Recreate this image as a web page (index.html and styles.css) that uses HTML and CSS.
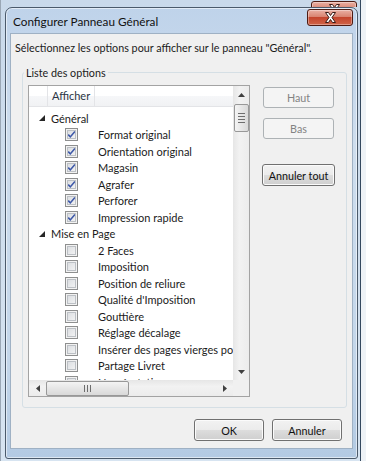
FILE: index.html
```html
<!DOCTYPE html>
<html lang="fr">
<head>
  <meta charset="UTF-8">
  <meta name="viewport" content="width=device-width, initial-scale=1.0">
  <title>Configurer Panneau Général</title>
  <link rel="stylesheet" href="styles.css">
</head>
<body>
  <div class="back-window">
    <div class="back-bar">
      <span class="close-btn back-close">
        <svg width="15" height="13" viewBox="0 0 15 13"><path d="M2.5 1.5h3l2 3 2-3h3l-3.5 5 3.5 5h-3l-2-3-2 3h-3l3.5-5z" fill="#fff" stroke="#3b1b16" stroke-width="1"/></svg>
      </span>
    </div>

    <div class="dialog">
      <div class="titlebar">
        <span class="title">Configurer Panneau Général</span>
        <button class="close-btn">
          <svg width="15" height="13" viewBox="0 0 15 13"><path d="M2.5 1.5h3l2 3 2-3h3l-3.5 5 3.5 5h-3l-2-3-2 3h-3l3.5-5z" fill="#fff" stroke="#3b1b16" stroke-width="1"/></svg>
        </button>
      </div>

      <div class="client">
        <p class="intro">Sélectionnez les options pour afficher sur le panneau "Général".</p>

        <!-- Liste des options -->
        <div class="group">
          <div class="group-title">Liste des options</div>
          <div class="group-body">
            <div class="listview">
              <div class="lv-main">
                <div class="lv-content">
                  <div class="lv-header">
                    <div class="col col-a"></div>
                    <div class="col col-b">Afficher</div>
                    <div class="col col-c"></div>
                  </div>
                  <div class="lv-rows">
                    <div class="row group-row"><svg class="expander" width="6" height="6" viewBox="0 0 6 6"><path d="M6 0v6H0z" fill="#262626"/></svg>Général</div>
                    <div class="row item"><span class="check on"></span>Format original</div>
                    <div class="row item"><span class="check on"></span>Orientation original</div>
                    <div class="row item"><span class="check on"></span>Magasin</div>
                    <div class="row item"><span class="check on"></span>Agrafer</div>
                    <div class="row item"><span class="check on"></span>Perforer</div>
                    <div class="row item"><span class="check on"></span>Impression rapide</div>
                    <div class="row group-row"><svg class="expander" width="6" height="6" viewBox="0 0 6 6"><path d="M6 0v6H0z" fill="#262626"/></svg>Mise en Page</div>
                    <div class="row item"><span class="check"></span>2 Faces</div>
                    <div class="row item"><span class="check"></span>Imposition</div>
                    <div class="row item"><span class="check"></span>Position de reliure</div>
                    <div class="row item"><span class="check"></span>Qualité d'Imposition</div>
                    <div class="row item"><span class="check"></span>Gouttière</div>
                    <div class="row item"><span class="check"></span>Réglage décalage</div>
                    <div class="row item"><span class="check"></span>Insérer des pages vierges pour</div>
                    <div class="row item"><span class="check"></span>Partage Livret</div>
                    <div class="row item"><span class="check"></span>Numérotation</div>
                  </div>
                </div>
                <div class="vscroll">
                  <div class="arrow"><svg width="7" height="4" viewBox="0 0 7 4"><path d="M3.5 0L7 4H0z" fill="#404040"/></svg></div>
                  <div class="vthumb"><span></span><span></span><span></span><span></span></div>
                  <div class="track"></div>
                  <div class="arrow"><svg width="7" height="4" viewBox="0 0 7 4"><path d="M0 0h7L3.5 4z" fill="#404040"/></svg></div>
                </div>
              </div>
              <div class="lv-bottom">
                <div class="hscroll">
                  <div class="arrow"><svg width="4" height="7" viewBox="0 0 4 7"><path d="M0 3.5L4 0v7z" fill="#404040"/></svg></div>
                  <div class="hthumb"><span></span><span></span><span></span></div>
                  <div class="track"></div>
                  <div class="arrow"><svg width="4" height="7" viewBox="0 0 4 7"><path d="M0 0l4 3.5L0 7z" fill="#404040"/></svg></div>
                </div>
                <div class="corner"></div>
              </div>
            </div>

            <div class="side">
              <button class="btn" disabled>Haut</button>
              <button class="btn move-down" disabled>Bas</button>
              <button class="btn wide">Annuler tout</button>
            </div>
          </div>
        </div>

        <div class="footer">
          <button class="btn">OK</button>
          <button class="btn">Annuler</button>
        </div>
      </div>
    </div>
  </div>
</body>
</html>
```

FILE: styles.css
```css
body {
  margin: 0;
  width: 366px;
  height: 461px;
  overflow: hidden;
  background: #eef2f6;
  font-family: Lato, "Noto Sans", sans-serif;
  font-size: 11px;
  color: #1b1b1b;
}
.back-window {
  width: 361px;
  height: 461px;
  box-sizing: border-box;
  border-left: 1px solid #9aa7b5;
  border-right: 1px solid #34485e;
  background: linear-gradient(#c9d9ea, #d7e4f1);
}
.back-bar {
  height: 7px;
  overflow: hidden;
  display: flex;
  justify-content: flex-end;
  padding-right: 3px;
}
.back-close {
  margin-top: -10px;
}
.close-btn {
  width: 46px;
  height: 17px;
  box-sizing: border-box;
  margin-top: 1px;
  padding: 0;
  border: 1px solid #4e1b12;
  border-radius: 3px;
  background: linear-gradient(#eab0a3, #d98471 45%, #c4452d 50%, #cf6448);
  box-shadow: inset 0 0 0 1px rgba(255, 255, 255, 0.35);
  display: flex;
  align-items: center;
  justify-content: center;
}
.dialog {
  margin: 0 2px 0 4px;
  height: 452px;
  box-sizing: border-box;
  border: 1px solid #4b5a6b;
  border-radius: 7px 7px 3px 3px;
  background: linear-gradient(#bfd3ea, #cfdeee 30%, #c3d6ea 80%, #b3cae3);
  box-shadow: inset 0 0 0 1px rgba(255, 255, 255, 0.55);
  padding: 0 4px 9px;
  display: flex;
  flex-direction: column;
}
.titlebar {
  height: 25px;
  flex-shrink: 0;
  display: flex;
  justify-content: space-between;
  align-items: flex-start;
}
.title {
  margin: 6px 0 0 3px;
  line-height: 16px;
  font-size: 11.75px;
  color: #111;
}
.client {
  flex: 1;
  border: 1px solid #9fb1c4;
  background: #f0f0f0;
  display: flex;
  flex-direction: column;
}
.intro {
  margin: 0;
  padding: 6px 0 0 4px;
  line-height: 15px;
  font-size: 10.75px;
}
.group {
  margin: 17px 5px 0 11px;
  border: 1px solid #d5dfe5;
  border-radius: 3px;
  padding: 0 5px 10px;
}
.group-title {
  display: table;
  margin: -8px 0 0 -4px;
  padding: 0 2px;
  line-height: 15px;
  font-size: 10.75px;
  background: #f0f0f0;
}
.group-body {
  display: flex;
  margin-top: 5px;
}
.listview {
  width: 222px;
  height: 312px;
  box-sizing: border-box;
  border: 1px solid #a3a3a3;
  background: #fff;
  display: flex;
  flex-direction: column;
}
.lv-main {
  flex: 1;
  display: flex;
  min-height: 0;
}
.lv-content {
  flex: 1;
  min-width: 0;
  overflow: hidden;
}
.lv-header {
  height: 21px;
  box-sizing: border-box;
  display: flex;
  border-bottom: 1px solid #e3e4e7;
  background: linear-gradient(#fff, #fff 50%, #f6f7f9 50%, #f1f2f4);
}
.col {
  line-height: 20px;
  border-right: 1px solid #e3e4e7;
  color: #2b3443;
}
.col-a {
  width: 18px;
}
.col-b {
  width: 42px;
  padding-left: 4px;
}
.col-c {
  flex: 1;
  border-right: 0;
}
.lv-rows {
  padding-top: 3px;
}
.row {
  height: 16.5px;
  display: flex;
  align-items: center;
  white-space: nowrap;
}
.group-row {
  padding-left: 10px;
}
.expander {
  margin-right: 6px;
}
.item {
  padding-left: 36px;
}
.check {
  flex-shrink: 0;
  width: 13px;
  height: 13px;
  box-sizing: border-box;
  margin-right: 20px;
  border: 1px solid #8e8f8f;
  background: linear-gradient(135deg, #d6d9dd, #f7f7f7);
  box-shadow: inset 0 0 0 1px #f2f2f2, inset 0 0 0 2px #bcc0c5;
}
.check.on {
  background: url("data:image/svg+xml,%3Csvg xmlns='http://www.w3.org/2000/svg' width='11' height='11'%3E%3Cpath d='M2.2 5.6l2.1 2.3 4.6-5.4' fill='none' stroke='%233d58a8' stroke-width='1.6'/%3E%3C/svg%3E") center no-repeat, linear-gradient(135deg, #d6d9dd, #f7f7f7);
}
.vscroll {
  width: 16px;
  flex-shrink: 0;
  display: flex;
  flex-direction: column;
  align-items: center;
  background: linear-gradient(to right, #e6e6e6, #f2f2f2 40%, #ececec);
}
.arrow {
  width: 17px;
  height: 17px;
  display: flex;
  align-items: center;
  justify-content: center;
  flex-shrink: 0;
}
.vthumb {
  width: 15px;
  height: 28px;
  box-sizing: border-box;
  margin-top: 1px;
  border: 1px solid #989898;
  border-radius: 2px;
  background: linear-gradient(to right, #f4f4f4, #e6e6e6 50%, #d9d9d9);
  display: flex;
  flex-direction: column;
  align-items: center;
  justify-content: center;
  gap: 2px;
}
.vthumb span {
  width: 7px;
  height: 1px;
  background: #6d6d6d;
}
.track {
  flex: 1;
}
.lv-bottom {
  height: 16px;
  flex-shrink: 0;
  display: flex;
}
.hscroll {
  flex: 1;
  display: flex;
  align-items: center;
  background: linear-gradient(#e6e6e6, #f2f2f2 40%, #ececec);
}
.hthumb {
  width: 83px;
  height: 15px;
  box-sizing: border-box;
  border: 1px solid #989898;
  border-radius: 2px;
  background: linear-gradient(#f4f4f4, #e6e6e6 50%, #d9d9d9);
  display: flex;
  align-items: center;
  justify-content: center;
  gap: 2px;
}
.hthumb span {
  width: 1px;
  height: 7px;
  background: #6d6d6d;
}
.corner {
  width: 16px;
  background: #f0f0f0;
}
.side {
  width: 73px;
  margin-left: 12px;
  padding-top: 2px;
  display: flex;
  flex-direction: column;
  align-items: center;
}
.btn {
  font: inherit;
  font-size: 10.75px;
  height: 21px;
  padding: 0;
  border: 1px solid #707070;
  border-radius: 3px;
  background: linear-gradient(#f2f2f2, #ebebeb 50%, #dddddd 50%, #cfcfcf);
  box-shadow: inset 0 0 0 1px #fbfbfb;
  color: #111;
}
.btn:disabled {
  border-color: #adb2b5;
  background: #f4f4f4;
  box-shadow: none;
  color: #838383;
}
.side .btn {
  width: 71px;
}
.side .move-down {
  margin-top: 10px;
}
.side .wide {
  width: 73px;
  height: 22px;
  margin-top: 25px;
}
.footer {
  margin-top: 11px;
  padding-right: 10px;
  display: flex;
  justify-content: flex-end;
  gap: 8px;
}
.footer .btn {
  width: 70px;
  height: 22px;
}
```
